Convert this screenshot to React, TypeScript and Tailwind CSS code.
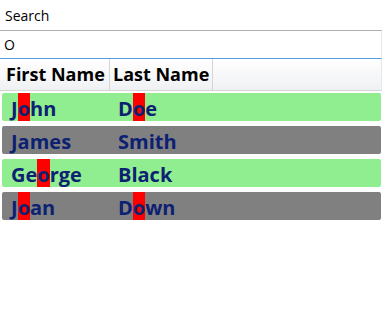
import React from "react";

type Person = { first: string; last: string };

const people: Person[] = [
  { first: "John", last: "Doe" },
  { first: "James", last: "Smith" },
  { first: "George", last: "Black" },
  { first: "Joan", last: "Down" },
];

const query = "o";

function Highlighted({ text }: { text: string }) {
  const idx = text.toLowerCase().indexOf(query);
  if (idx < 0) {
    return <span className="inline-block leading-[28px] pt-[2px]">{text}</span>;
  }
  return (
    <>
      <span className="inline-block leading-[28px] pt-[2px]">{text.slice(0, idx)}</span>
      <span className="inline-block leading-[28px] pt-[2px] bg-[#ff0000]">
        {text.slice(idx, idx + query.length)}
      </span>
      <span className="inline-block leading-[28px] pt-[2px]">{text.slice(idx + query.length)}</span>
    </>
  );
}

export default function App() {
  return (
    <div
      className="w-[383px] h-[314px] bg-white flex flex-col"
      style={{ fontFamily: '"Open Sans", "Noto Sans", sans-serif' }}
    >
      <div className="h-[30px] flex items-center pl-[5px] text-[14px] text-black">Search</div>
      <div className="h-[29px] w-[382px] border-t border-t-[#abadb3] border-r border-r-[#e3e9ef] border-b border-b-[#569de5] flex items-center pl-[4px] text-[14px] text-black">
        O
      </div>
      <div className="h-[32px] w-[382px] flex bg-gradient-to-b from-white to-[#f0f1f3] border-b border-b-[#d5d5d5] border-r border-r-[#e3e9ef]">
        <div className="w-[110px] border-r border-r-[#d5d5d5] flex items-center pl-[6px] text-[18px] font-bold text-black whitespace-nowrap">
          First Name
        </div>
        <div className="w-[103px] border-r border-r-[#d5d5d5] flex items-center pl-[3px] text-[18px] font-bold text-black whitespace-nowrap">
          Last Name
        </div>
      </div>
      <div className="flex flex-col gap-[5px] pt-[2px] px-[2px]">
        {people.map((p, i) => (
          <div
            key={p.first}
            className={`h-[28px] w-[379px] rounded-[2px] flex text-[20px] font-bold text-[#0d2172] ${
              i % 2 === 0 ? "bg-[#90ee90]" : "bg-[#808080]"
            }`}
          >
            <div className="w-[107px] pl-[9px] flex whitespace-nowrap">
              <Highlighted text={p.first} />
            </div>
            <div className="pl-[9px] flex whitespace-nowrap">
              <Highlighted text={p.last} />
            </div>
          </div>
        ))}
      </div>
    </div>
  );
}
